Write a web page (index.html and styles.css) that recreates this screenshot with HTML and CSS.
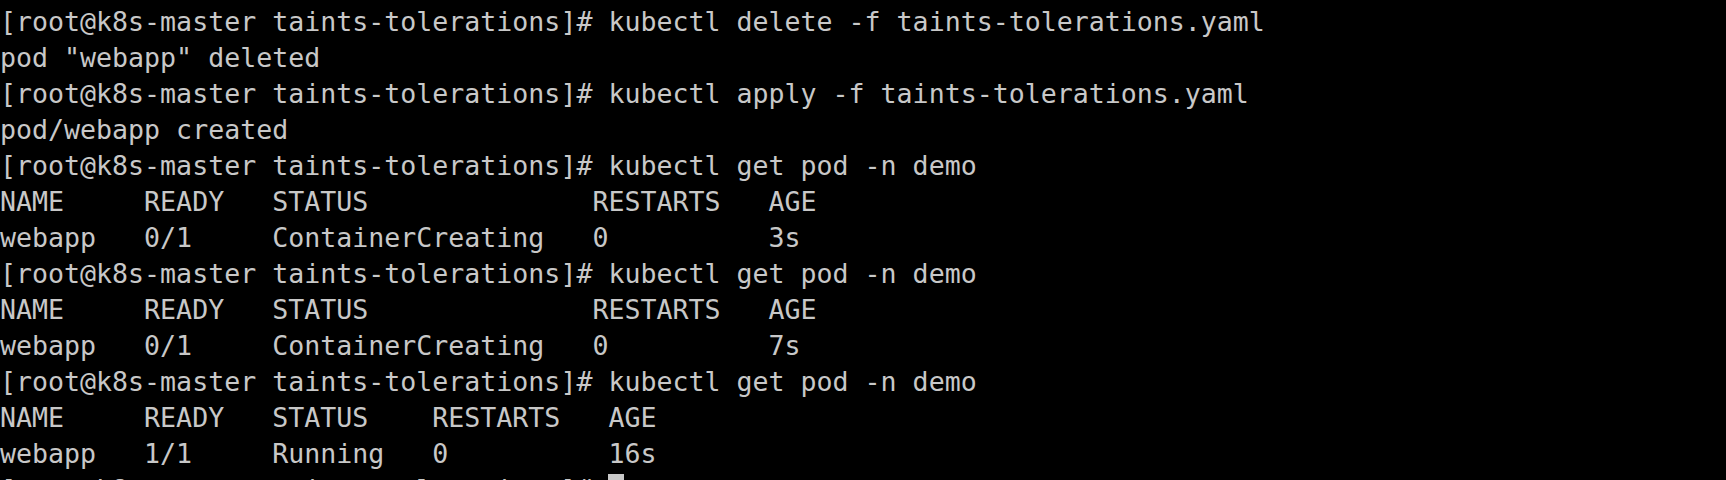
FILE: index.html
```html
<!DOCTYPE html>
<html lang="en">
<head>
<meta charset="utf-8">
<title>Terminal</title>
<link rel="stylesheet" href="styles.css">
</head>
<body>
<main class="terminal">
<div class="line">[root@k8s-master taints-tolerations]# kubectl delete -f taints-tolerations.yaml</div>
<div class="line">pod "webapp" deleted</div>
<div class="line">[root@k8s-master taints-tolerations]# kubectl apply -f taints-tolerations.yaml</div>
<div class="line">pod/webapp created</div>
<div class="line">[root@k8s-master taints-tolerations]# kubectl get pod -n demo</div>
<div class="line">NAME     READY   STATUS              RESTARTS   AGE</div>
<div class="line">webapp   0/1     ContainerCreating   0          3s</div>
<div class="line">[root@k8s-master taints-tolerations]# kubectl get pod -n demo</div>
<div class="line">NAME     READY   STATUS              RESTARTS   AGE</div>
<div class="line">webapp   0/1     ContainerCreating   0          7s</div>
<div class="line">[root@k8s-master taints-tolerations]# kubectl get pod -n demo</div>
<div class="line">NAME     READY   STATUS    RESTARTS   AGE</div>
<div class="line">webapp   1/1     Running   0          16s</div>
<div class="line">[root@k8s-master taints-tolerations]# <span class="cursor"></span></div>
</main>
</body>
</html>
```
FILE: styles.css
```css
html, body {
  margin: 0;
  padding: 0;
  background: #000;
  height: 480px;
  overflow: hidden;
}

.terminal {
  padding: 4px 0 0 0;
  font-family: "DejaVu Sans Mono", "Liberation Mono", monospace;
  font-size: 26.6px;
  line-height: 36px;
  color: #c8c8c8;
}

.line {
  white-space: pre;
  height: 36px;
}

.cursor {
  display: inline-block;
  width: 16px;
  height: 32px;
  margin-top: 2px;
  vertical-align: top;
  background: #c8c8c8;
}
```
